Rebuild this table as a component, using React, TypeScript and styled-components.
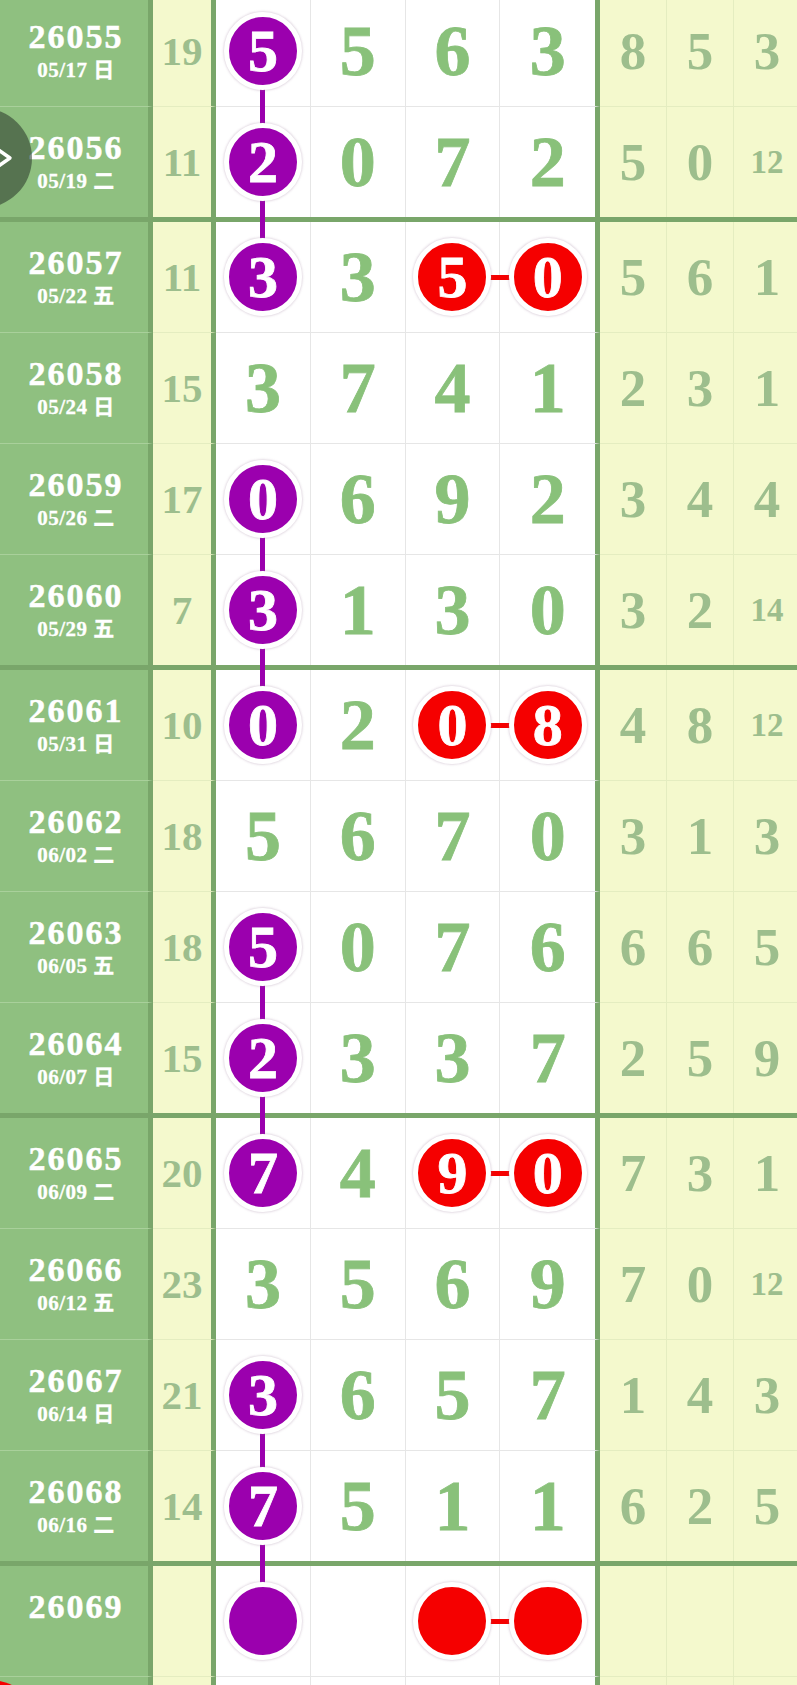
import React from 'react';
import styled, { createGlobalStyle } from 'styled-components';

const GlobalStyle = createGlobalStyle`
  html, body {
    margin: 0;
    padding: 0;
    background: #ffffff;
    overflow: hidden;
  }
  * {
    box-sizing: border-box;
  }
`;

const SERIF = `"Liberation Serif", "Times New Roman", "Noto Sans CJK SC", serif`;

const PURPLE = '#9b00ae';
const RED = '#f50000';
const LINE = '#79a66a';

type Draw = {
  id: string;
  date?: string;
  sum?: number;
  nums: (number | null)[];
  purple?: boolean;
  red?: boolean;
  tail: (number | null)[];
};

const groups: Draw[][] = [
  [
    { id: '26055', date: '05/17 日', sum: 19, nums: [5, 5, 6, 3], purple: true, tail: [8, 5, 3] },
    { id: '26056', date: '05/19 二', sum: 11, nums: [2, 0, 7, 2], purple: true, tail: [5, 0, 12] },
  ],
  [
    { id: '26057', date: '05/22 五', sum: 11, nums: [3, 3, 5, 0], purple: true, red: true, tail: [5, 6, 1] },
    { id: '26058', date: '05/24 日', sum: 15, nums: [3, 7, 4, 1], tail: [2, 3, 1] },
    { id: '26059', date: '05/26 二', sum: 17, nums: [0, 6, 9, 2], purple: true, tail: [3, 4, 4] },
    { id: '26060', date: '05/29 五', sum: 7, nums: [3, 1, 3, 0], purple: true, tail: [3, 2, 14] },
  ],
  [
    { id: '26061', date: '05/31 日', sum: 10, nums: [0, 2, 0, 8], purple: true, red: true, tail: [4, 8, 12] },
    { id: '26062', date: '06/02 二', sum: 18, nums: [5, 6, 7, 0], tail: [3, 1, 3] },
    { id: '26063', date: '06/05 五', sum: 18, nums: [5, 0, 7, 6], purple: true, tail: [6, 6, 5] },
    { id: '26064', date: '06/07 日', sum: 15, nums: [2, 3, 3, 7], purple: true, tail: [2, 5, 9] },
  ],
  [
    { id: '26065', date: '06/09 二', sum: 20, nums: [7, 4, 9, 0], purple: true, red: true, tail: [7, 3, 1] },
    { id: '26066', date: '06/12 五', sum: 23, nums: [3, 5, 6, 9], tail: [7, 0, 12] },
    { id: '26067', date: '06/14 日', sum: 21, nums: [3, 6, 5, 7], purple: true, tail: [1, 4, 3] },
    { id: '26068', date: '06/16 二', sum: 14, nums: [7, 5, 1, 1], purple: true, tail: [6, 2, 5] },
  ],
  [
    { id: '26069', nums: [null, null, null, null], purple: true, red: true, tail: [null, null, null] },
    { id: '', nums: [null, null, null, null], tail: [null, null, null] },
  ],
];

const Viewport = styled.div`
  height: 100vh;
  overflow: hidden;
`;

const Sheet = styled.div`
  margin-top: -4px;
  width: 801px;
  font-family: ${SERIF};
`;

const Group = styled.div`
  border-bottom: 5px solid ${LINE};
`;

const Row = styled.div<{ $first: boolean }>`
  display: flex;
  height: ${(p) => (p.$first ? 110 : 111)}px;
`;

const LabelCell = styled.div<{ $first: boolean }>`
  width: 153px;
  flex: none;
  background: #8fc080;
  border-right: 5px solid ${LINE};
  border-top: ${(p) => (p.$first ? 'none' : '1px solid #a9d09b')};
  display: flex;
  flex-direction: column;
  align-items: center;
  justify-content: center;
  color: #ffffff;
  font-weight: bold;
  padding-left: 4px;
  -webkit-text-stroke: 0.5px #ffffff;
`;

const Issue = styled.div`
  font-size: 34px;
  letter-spacing: 2px;
  line-height: 36px;
  height: 36px;
`;

const Day = styled.div`
  font-size: 21px;
  letter-spacing: 0.5px;
  line-height: 26px;
  height: 26px;
  margin-top: 2px;
  -webkit-text-stroke: 0.3px #ffffff;
`;

const SumCell = styled.div<{ $first: boolean }>`
  width: 63px;
  flex: none;
  background: #f4f9cd;
  border-right: 5px solid ${LINE};
  border-top: ${(p) => (p.$first ? 'none' : '1px solid #e4edc0')};
  display: flex;
  align-items: center;
  justify-content: center;
  color: #9dbe8d;
  font-weight: bold;
  font-size: 41px;
  line-height: 1;
`;

const DrawCell = styled.div<{ $first: boolean; $last: boolean }>`
  position: relative;
  width: ${(p) => (p.$last ? 99.75 : 94.75)}px;
  flex: none;
  background: #ffffff;
  border-right: ${(p) => (p.$last ? `5px solid ${LINE}` : '1px solid #e6e6e6')};
  border-top: ${(p) => (p.$first ? 'none' : '1px solid #e6e6e6')};
  display: flex;
  align-items: center;
  justify-content: center;
  color: #89c17a;
  font-weight: bold;
  font-size: 72px;
  line-height: 1;
  -webkit-text-stroke: 0.8px #89c17a;
`;

const Ball = styled.div<{ $color: string }>`
  position: relative;
  z-index: 3;
  width: 78px;
  height: 78px;
  border-radius: 50%;
  background: ${(p) => p.$color};
  border: 5px solid #ffffff;
  box-shadow: 0 0 2px 1px rgba(150, 120, 150, 0.25);
  display: flex;
  align-items: center;
  justify-content: center;
  color: #ffffff;
  font-size: 60px;
  line-height: 1;
  -webkit-text-stroke: 0.8px #ffffff;
`;

const Stem = styled.div<{ $reach: number }>`
  position: absolute;
  z-index: 2;
  left: calc(50% - 3px);
  bottom: 50%;
  width: 5px;
  height: ${(p) => p.$reach}px;
  background: ${PURPLE};
`;

const Dash = styled.div`
  position: absolute;
  z-index: 2;
  left: -14px;
  top: calc(50% - 2px);
  width: 26px;
  height: 5px;
  background: ${RED};
`;

const TailCell = styled.div<{ $first: boolean; $small: boolean }>`
  width: 67px;
  flex: none;
  background: #f4f9cd;
  border-right: 1px solid #e4edc0;
  border-top: ${(p) => (p.$first ? 'none' : '1px solid #e4edc0')};
  display: flex;
  align-items: center;
  justify-content: center;
  color: #9dbe8d;
  font-weight: bold;
  font-size: ${(p) => (p.$small ? 33 : 53)}px;
  line-height: 1;
`;

const Toggle = styled.div`
  position: fixed;
  left: -68px;
  top: 108px;
  width: 100px;
  height: 100px;
  border-radius: 50%;
  background: rgba(45, 58, 45, 0.58);
  z-index: 10;
  svg {
    position: absolute;
    left: 0;
    top: 0;
  }
`;

const RedDot = styled.div`
  position: fixed;
  left: -60px;
  top: 1680px;
  width: 100px;
  height: 100px;
  border-radius: 50%;
  background: ${RED};
  z-index: 10;
`;

export default function App() {
  const flat = groups.flat();

  return (
    <>
      <GlobalStyle />
      <Viewport>
        <Sheet>
          {groups.map((rows, g) => (
            <Group key={`g${g}`}>
              {rows.map((row, r) => {
                const first = r === 0;
                const index = flat.indexOf(row);
                const prev = index > 0 ? flat[index - 1] : undefined;
                const linked = row.purple && prev?.purple;
                return (
                  <Row key={`row_${row.id || index}`} $first={first}>
                    <LabelCell $first={first}>
                      <Issue>{row.id}</Issue>
                      <Day>{row.date}</Day>
                    </LabelCell>
                    <SumCell $first={first}>{row.sum}</SumCell>
                    {row.nums.map((n, i) => {
                      const isPurple = i === 0 && row.purple;
                      const isRed = i >= 2 && row.red;
                      return (
                        <DrawCell key={`n${i}`} $first={first} $last={i === 3}>
                          {isPurple && linked && <Stem $reach={first ? 115 : 111} />}
                          {isRed && i === 3 && <Dash />}
                          {isPurple || isRed ? (
                            <Ball $color={isPurple ? PURPLE : RED}>{n}</Ball>
                          ) : (
                            n
                          )}
                        </DrawCell>
                      );
                    })}
                    {row.tail.map((t, i) => (
                      <TailCell key={`t${i}`} $first={first} $small={t !== null && t > 9}>
                        {t}
                      </TailCell>
                    ))}
                  </Row>
                );
              })}
            </Group>
          ))}
        </Sheet>
      </Viewport>
      <Toggle>
        <svg width="100" height="100" viewBox="0 0 100 100" fill="none" stroke="#ffffff" strokeWidth="3.4" strokeLinecap="round" strokeLinejoin="round">
          <path d="M58 36 L78 50 L58 64" />
          <path d="M66 36 L54 50 L66 64" />
        </svg>
      </Toggle>
      <RedDot />
    </>
  );
}
